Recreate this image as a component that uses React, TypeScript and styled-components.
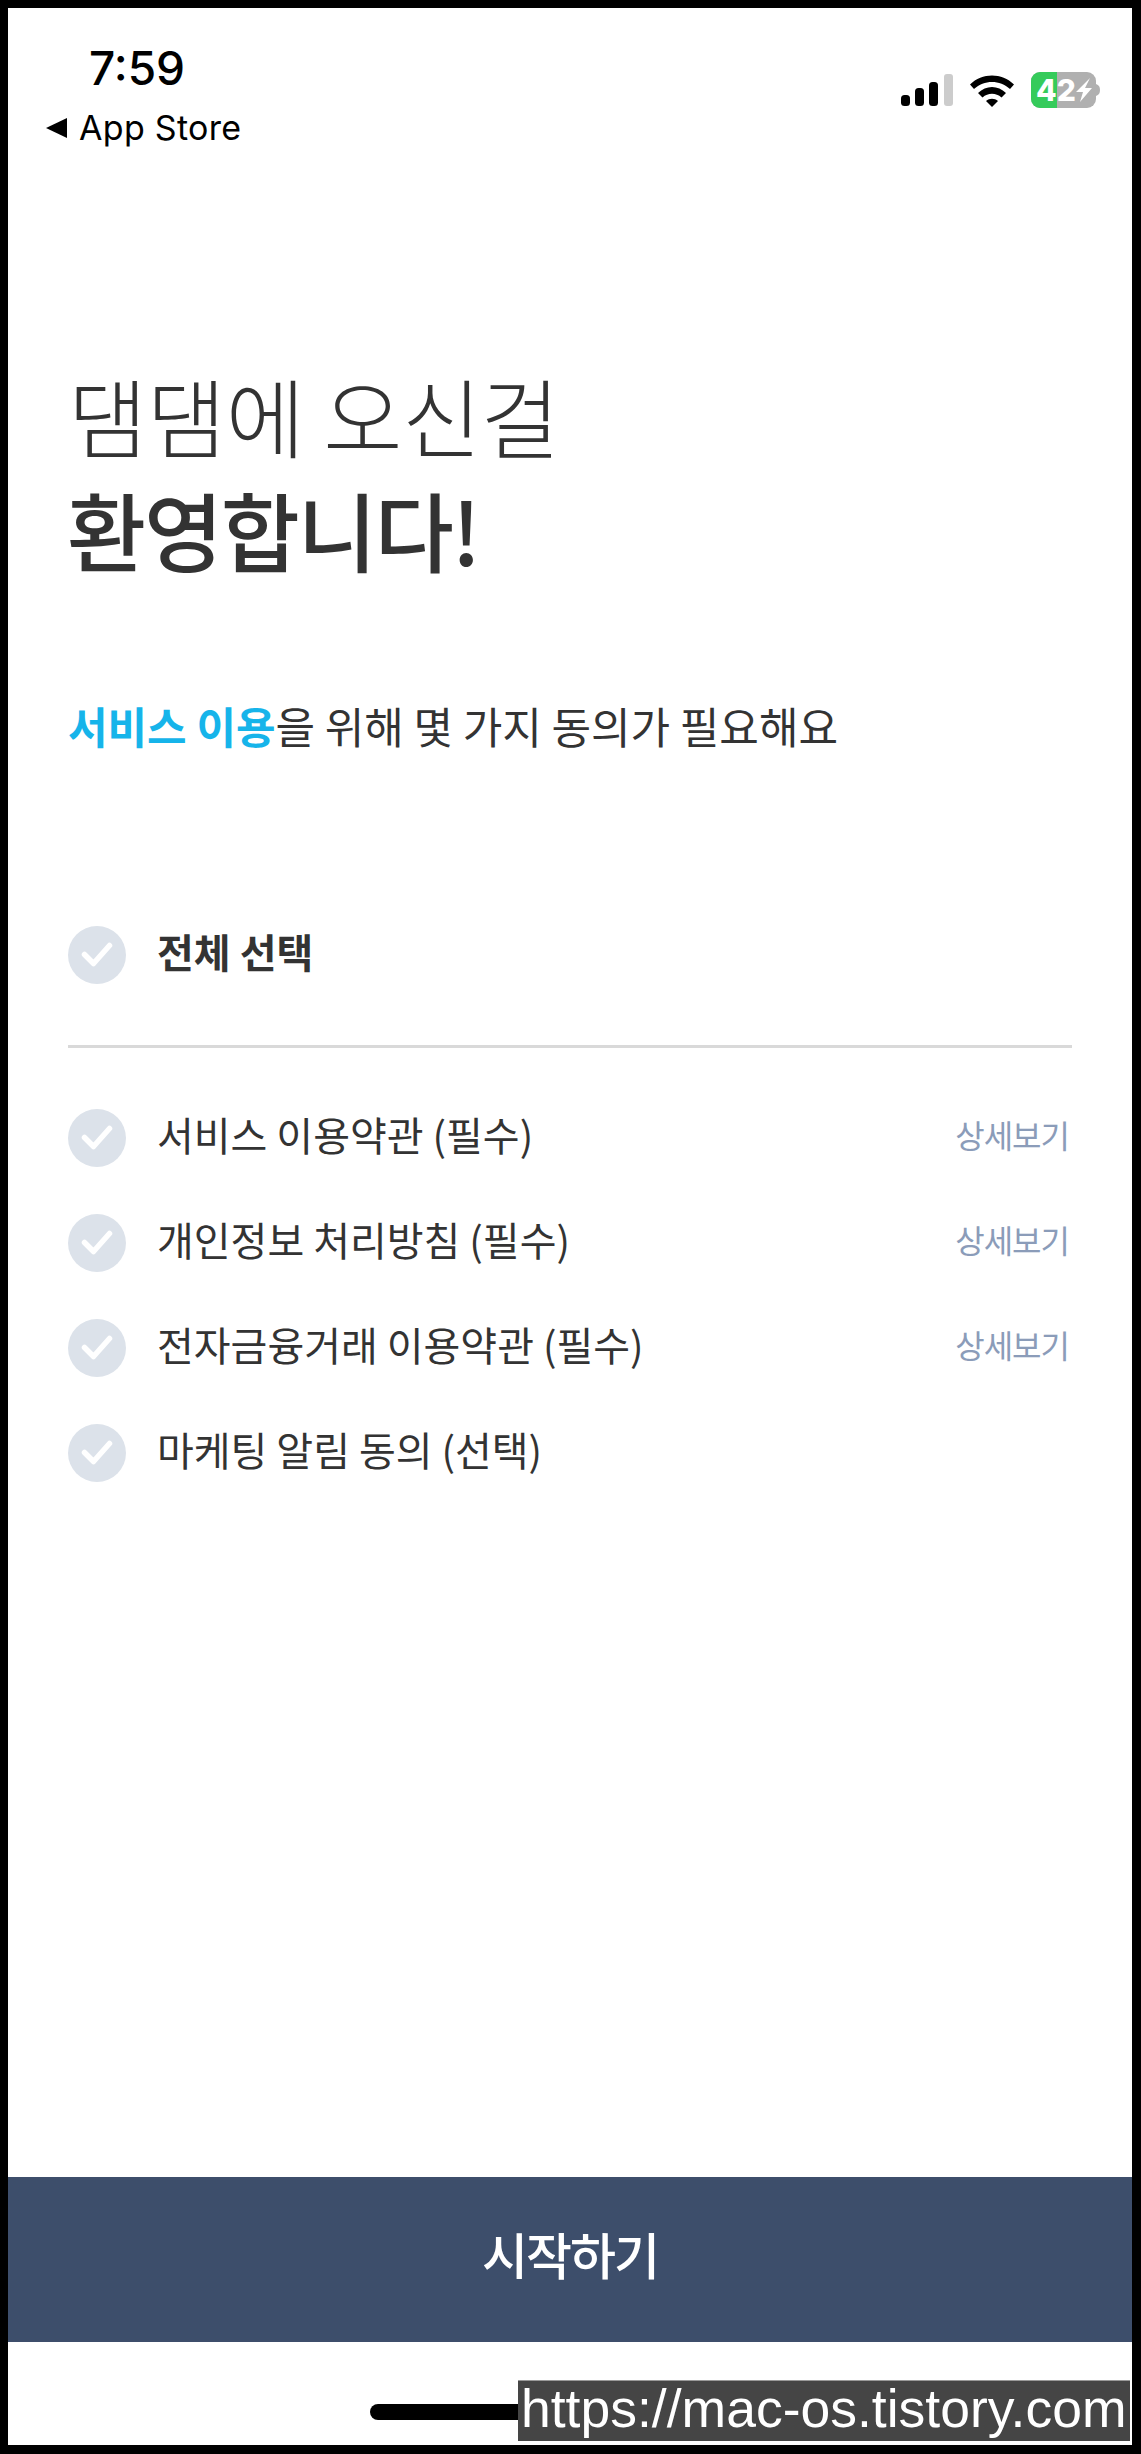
import styled, { createGlobalStyle } from "styled-components";

const GlobalStyle = createGlobalStyle`
  html, body {
    margin: 0;
    padding: 0;
    background: #000;
  }
  * {
    box-sizing: border-box;
  }
`;

const KOREAN = `"Noto Sans CJK KR", "Noto Sans", sans-serif`;

const Frame = styled.div`
  position: relative;
  width: 1141px;
  height: 2454px;
  padding: 8px 9px 9px 8px;
  background: #000;
`;

const Screen = styled.main`
  height: 100%;
  display: flex;
  flex-direction: column;
  background: #fff;
  font-family: ${KOREAN};
  color: #333;
`;

const StatusBar = styled.header`
  height: 150px;
  flex-shrink: 0;
  padding: 34px 32px 0 37px;
  display: flex;
  justify-content: space-between;
  font-family: Inter, "Liberation Sans", sans-serif;
  color: #000;
`;

const StatusLeft = styled.div`
  display: flex;
  flex-direction: column;
`;

const Clock = styled.div`
  margin-left: 44px;
  font-size: 46px;
  line-height: 52px;
  font-weight: 500;
`;

const BackLink = styled.div`
  margin-top: 14px;
  display: flex;
  align-items: center;
  gap: 11px;
  font-size: 34px;
  line-height: 40px;
  font-weight: 400;
  letter-spacing: 0.3px;
`;

const StatusIcons = styled.div`
  margin-top: 30px;
  height: 36px;
  display: flex;
  align-items: center;
  gap: 16px;
`;

const Content = styled.section`
  flex: 1;
  padding: 0 60px;
  display: flex;
  flex-direction: column;
`;

const Title = styled.h1`
  margin: 200px 0 0 0;
  font-size: 86px;
  line-height: 114px;
  font-weight: 300;
  letter-spacing: -0.3px;
`;

const TitleStrong = styled.span`
  display: block;
  margin-left: -1px;
  font-weight: 500;
  letter-spacing: -2.2px;
`;

const Lead = styled.p`
  margin: 111px 0 0 0;
  font-size: 43px;
  line-height: 56px;
`;

const Accent = styled.span`
  color: #16b4ea;
  font-weight: 700;
`;

const AllRow = styled.div`
  margin-top: 173px;
  height: 58px;
  display: flex;
  align-items: center;
  gap: 31px;
  font-size: 40px;
  font-weight: 700;
`;

const AllLabel = styled.span`
  padding-bottom: 8px;
`;

const Divider = styled.hr`
  margin: 61px 0 0 0;
  border: 0;
  height: 3px;
  background: #d9d9d9;
`;

const TermList = styled.ul`
  list-style: none;
  margin: 61px 0 0 0;
  padding: 0;
  display: flex;
  flex-direction: column;
  gap: 47px;
`;

const TermRow = styled.li`
  height: 58px;
  display: flex;
  align-items: center;
  gap: 31px;
  font-size: 40px;
`;

const TermLabel = styled.span`
  flex: 1;
  padding-bottom: 8px;
`;

const DetailLink = styled.a`
  padding-bottom: 8px;
  font-size: 32px;
  color: #8b9cb9;
  letter-spacing: -1px;
  margin-right: 3px;
`;

const CheckCircle = styled.span`
  width: 58px;
  height: 58px;
  flex-shrink: 0;
  border-radius: 50%;
  background: #dce2ea;
  display: flex;
  align-items: center;
  justify-content: center;
`;

const StartButton = styled.button`
  flex-shrink: 0;
  width: 100%;
  height: 165px;
  border: 0;
  padding: 0 0 14px 0;
  background: #3d4e6b;
  color: #fff;
  font-family: ${KOREAN};
  font-size: 50px;
  font-weight: 500;
  letter-spacing: -2px;
`;

const HomeArea = styled.div`
  flex-shrink: 0;
  height: 103px;
  padding: 62px 0 0 362px;
`;

const HomeBar = styled.div`
  width: 400px;
  height: 16px;
  border-radius: 8px;
  background: #000;
`;

const Watermark = styled.div`
  position: absolute;
  left: 518px;
  top: 2380px;
  width: 612px;
  height: 61px;
  padding-left: 3px;
  background: #454545;
  border-top: 1px solid #999;
  color: #fff;
  font-family: "Liberation Sans", Arial, sans-serif;
  font-size: 53.5px;
  line-height: 56px;
  white-space: nowrap;
`;

const Check = () => (
  <CheckCircle>
    <svg width="32" height="26" viewBox="0 0 32 26" fill="none">
      <path d="M3.500 12.500 12.500 21.500 28.500 3.500" stroke="#fff" strokeWidth="5.500" strokeLinecap="round" strokeLinejoin="round" />
    </svg>
  </CheckCircle>
);

const terms = [
  { label: "서비스 이용약관 (필수)", detail: true },
  { label: "개인정보 처리방침 (필수)", detail: true },
  { label: "전자금융거래 이용약관 (필수)", detail: true },
  { label: "마케팅 알림 동의 (선택)", detail: false },
];

export default function App() {
  return (
    <Frame>
      <GlobalStyle />
      <Screen>
        <StatusBar>
          <StatusLeft>
            <Clock>7:59</Clock>
            <BackLink>
              <svg width="23" height="22" viewBox="0 0 23 22">
                <path d="M1 11 22 1v20z" fill="#000" />
              </svg>
              App Store
            </BackLink>
          </StatusLeft>
          <StatusIcons>
            <svg width="52" height="32" viewBox="0 0 52 32">
              <rect x="0" y="21" width="9" height="11" rx="3.500" fill="#000" />
              <rect x="14" y="14" width="9" height="18" rx="3.500" fill="#000" />
              <rect x="28" y="8" width="9" height="24" rx="3.500" fill="#000" />
              <rect x="43" y="0" width="9" height="32" rx="3" fill="#ccc" />
            </svg>
            <svg width="46" height="33" viewBox="0 0 46 33">
              <path d="M1 10.500C13 -1.500 33 -1.500 45 10.500l-4 4.500C31 5.500 15 5.500 5 15z" fill="#000" />
              <path d="M9 19c8-8 20-8 28 0l-4.500 4.500c-5.500-5-13.500-5-19 0z" fill="#000" />
              <path d="M17 27c3.500-3 8.500-3 12 0l-6 6z" fill="#000" />
            </svg>
            <svg width="69" height="36" viewBox="0 0 69 36">
              <rect x="0" y="0" width="65" height="36" rx="9" fill="#b0b0b0" />
              <path d="M9 0h17v36H9a9 9 0 0 1-9-9V9a9 9 0 0 1 9-9z" fill="#35cb5b" />
              <path d="M65 12c3 1 4 3 4 6s-1 5-4 6z" fill="#b0b0b0" />
              <text x="5" y="28.500" fontFamily="Inter, sans-serif" fontSize="30" fontWeight="800" fill="#fff">42</text>
              <path d="M59 6 45 20h7l-3 10 12-14h-7z" fill="#fff" />
            </svg>
          </StatusIcons>
        </StatusBar>
        <Content>
          <Title>
            댐댐에 오신걸
            <TitleStrong>환영합니다!</TitleStrong>
          </Title>
          <Lead>
            <Accent>서비스 이용</Accent>을 위해 몇 가지 동의가 필요해요
          </Lead>
          <AllRow>
            <Check />
            <AllLabel>전체 선택</AllLabel>
          </AllRow>
          <Divider />
          <TermList>
            {terms.map((term) => (
              <TermRow key={term.label}>
                <Check />
                <TermLabel>{term.label}</TermLabel>
                {term.detail && <DetailLink>상세보기</DetailLink>}
              </TermRow>
            ))}
          </TermList>
        </Content>
        <StartButton>시작하기</StartButton>
        <HomeArea>
          <HomeBar />
        </HomeArea>
      </Screen>
      <Watermark>https://mac-os.tistory.com</Watermark>
    </Frame>
  );
}
